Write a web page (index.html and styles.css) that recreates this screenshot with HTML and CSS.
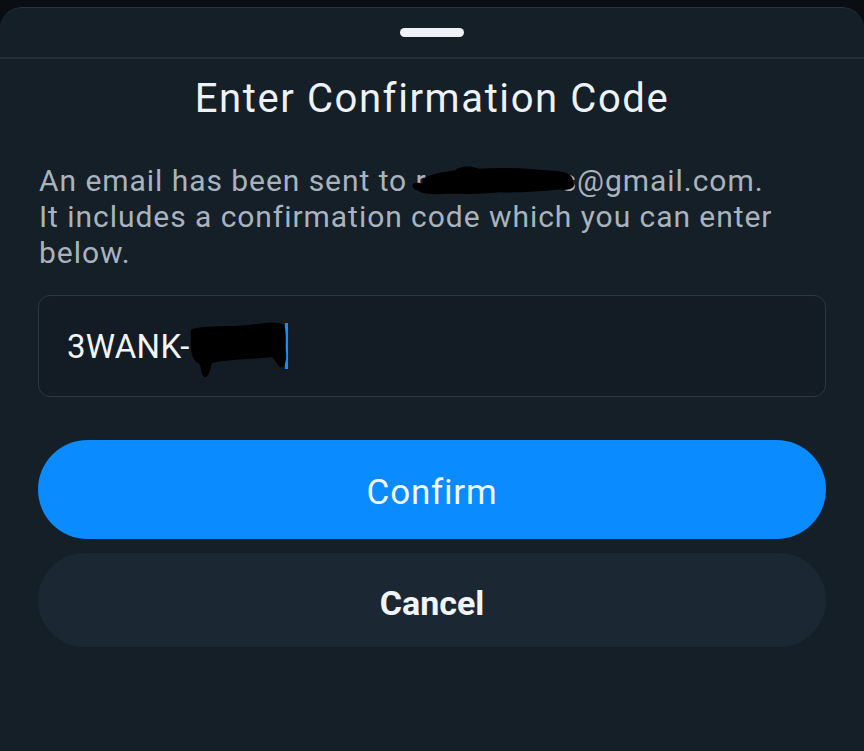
FILE: index.html
```html
<!DOCTYPE html>
<html lang="en">
<head>
<meta charset="utf-8">
<title>Enter Confirmation Code</title>
<link rel="stylesheet" href="styles.css">
</head>
<body>
<div class="sheet">
  <div class="handle-row"><div class="handle"></div></div>
  <div class="divider"></div>
  <div class="content">
    <h1 class="title">Enter Confirmation Code</h1>
    <p class="message">An email has been sent to r<span class="redacted email-redact"><svg class="blob" viewBox="0 0 170 36" preserveAspectRatio="none"><path d="M14 22 C10 14 30 10 46 8 C50 4 60 2 70 6 C95 4 120 6 140 8 C155 8 165 12 164 20 C168 26 160 30 150 28 C130 30 110 32 90 31 C70 34 50 32 30 33 C18 34 6 30 4 26 C2 20 8 20 14 22 Z" fill="#000"/></svg></span>s@gmail.com.<br>It includes a confirmation code which you can enter below.</p>
    <div class="field">
      <span class="code">3WANK-</span><span class="redacted code-redact"><svg class="blob" viewBox="0 0 100 62" preserveAspectRatio="none"><path d="M4 10 C20 6 40 8 60 6 C75 4 90 2 96 6 C99 14 97 24 98 34 C99 42 96 50 92 48 C88 44 86 40 84 38 C70 40 40 40 24 44 C22 52 20 60 16 58 C12 54 14 46 10 44 C4 42 2 30 3 20 C3 14 2 12 4 10 Z" fill="#000"/></svg></span><span class="caret"></span>
    </div>
    <button class="btn btn-primary" type="button">Confirm</button>
    <button class="btn btn-secondary" type="button">Cancel</button>
  </div>
</div>
</body>
</html>
```
FILE: styles.css
```css
html, body {
  margin: 0;
  padding: 0;
  background: #0a0e12;
  height: 100%;
}
body {
  font-family: Roboto, "Liberation Sans", sans-serif;
  overflow: hidden;
}
.sheet {
  margin-top: 7px;
  background: #141f28;
  border-top: 1px solid #27323b;
  border-radius: 22px 22px 0 0;
  height: 744px;
}
.handle-row {
  display: flex;
  justify-content: center;
  padding-top: 20px;
}
.handle {
  width: 64px;
  height: 9px;
  border-radius: 5px;
  background: #eef1f5;
}
.divider {
  margin-top: 20px;
  height: 2px;
  background: #222d37;
}
.content {
  padding: 0 38px;
  display: flex;
  flex-direction: column;
}
.title {
  margin: 16px 0 0;
  text-align: center;
  font-size: 40px;
  font-weight: 400;
  line-height: 48px;
  color: #eef1f5;
  letter-spacing: 1.6px;
}
.message {
  margin: 40px 0 0 1px;
  font-size: 30px;
  line-height: 36px;
  color: #a9b3bd;
  letter-spacing: 0.95px;
}
.redacted {
  position: relative;
  display: inline-block;
}
.blob {
  position: absolute;
}
.email-redact {
  width: 134px;
  height: 20px;
}
.email-redact .blob {
  left: -18px;
  top: -8px;
  width: 170px;
  height: 34px;
}
.field {
  margin-top: 24px;
  height: 100px;
  border: 1.5px solid #2c3945;
  border-radius: 12px;
  background: #131c25;
  display: flex;
  align-items: center;
  padding-left: 28px;
  font-size: 33px;
  letter-spacing: 0.3px;
  color: #f2f4f7;
}
.code-redact {
  width: 95px;
  height: 40px;
}
.code-redact .blob {
  left: -2px;
  top: -7px;
  width: 100px;
  height: 62px;
}
.caret {
  width: 3px;
  height: 46px;
  background: #1a8cff;
}
.btn {
  border: none;
  border-radius: 50px;
  font-family: Roboto, "Liberation Sans", sans-serif;
  cursor: pointer;
  padding: 5px 0 0;
}
.btn-primary {
  margin-top: 43px;
  height: 99px;
  background: #0a8bff;
  color: #f4f8ff;
  font-size: 35px;
  font-weight: 400;
  letter-spacing: 0.8px;
}
.btn-secondary {
  margin-top: 14px;
  height: 94px;
  background: #1b2833;
  color: #f2f4f7;
  font-size: 34px;
  font-weight: 700;
}
```
